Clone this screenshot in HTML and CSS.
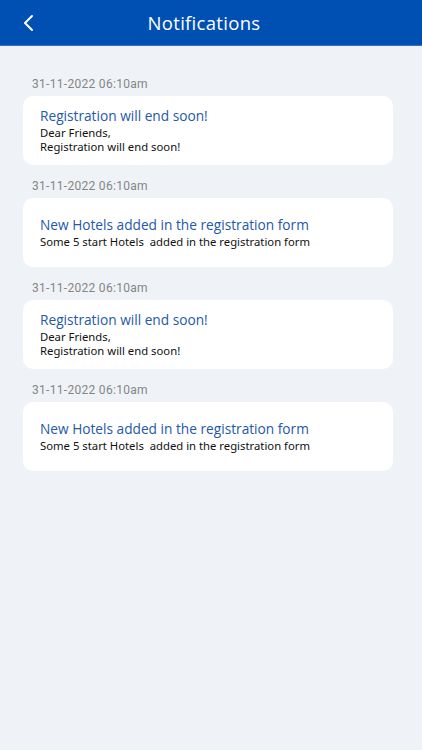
FILE: index.html
```html
<!DOCTYPE html>
<html lang="en">
<head>
  <meta charset="UTF-8" />
  <meta name="viewport" content="width=device-width, initial-scale=1.0"/>
  <title>Notifications</title>
  <link rel="stylesheet" href="styles.css">
</head>
<body>
  <header>
    <button class="back" aria-label="Back">
      <svg width="12" height="18" viewBox="0 0 12 18"><path d="M10 2 L3 9 L10 16" fill="none" stroke="#fff" stroke-width="2" stroke-linecap="round" stroke-linejoin="round"/></svg>
    </button>
    <h1>Notifications</h1>
  </header>

  <div id="list">
    <div class="item">
      <div class="date">31-11-2022 06:10am</div>
      <div class="card">
        <div class="title">Registration will end soon!</div>
        <div class="text">Dear Friends,<br>Registration will end soon!</div>
      </div>
    </div>
    <div class="item">
      <div class="date">31-11-2022 06:10am</div>
      <div class="card">
        <div class="title">New Hotels added in the registration form</div>
        <div class="text">Some 5 start Hotels&nbsp; added in the registration form</div>
      </div>
    </div>
    <div class="item">
      <div class="date">31-11-2022 06:10am</div>
      <div class="card">
        <div class="title">Registration will end soon!</div>
        <div class="text">Dear Friends,<br>Registration will end soon!</div>
      </div>
    </div>
    <div class="item">
      <div class="date">31-11-2022 06:10am</div>
      <div class="card">
        <div class="title">New Hotels added in the registration form</div>
        <div class="text">Some 5 start Hotels&nbsp; added in the registration form</div>
      </div>
    </div>
  </div>
</body>
</html>
```

FILE: styles.css
```css
body {
  margin: 0;
  padding: 0;
  background: #eff3f7;
  font-family: "Open Sans", sans-serif;
  min-height: 750px;
}
header {
  height: 45px;
  display: flex;
  align-items: center;
  justify-content: center;
  position: relative;
  background-color: #0050b4;
  border-bottom: 1px solid #3f6fb8;
}
header h1 {
  margin: 0 14px 0 0;
  font-size: 18.5px;
  font-weight: 400;
  color: #fff;
  letter-spacing: 0.3px;
}
.back {
  position: absolute;
  left: 18px;
  top: 13px;
  background: none;
  border: 0;
  padding: 0;
  width: 20px;
  height: 20px;
  display: flex;
  align-items: center;
  justify-content: center;
}
#list {
  display: flex;
  flex-direction: column;
  gap: 13px;
  padding: 30px 29px 0 23px;
}
.date {
  font-family: Roboto, sans-serif;
  font-size: 12px;
  font-weight: 400;
  color: #858585;
  line-height: 16px;
  letter-spacing: 0.3px;
  padding-left: 9px;
  margin-bottom: 4px;
}
.card {
  background: #fff;
  border-radius: 10px;
  min-height: 69px;
  box-sizing: border-box;
  padding: 6px 17px;
  display: flex;
  flex-direction: column;
  justify-content: center;
}
.title {
  font-size: 13.7px;
  color: #2458ab;
  line-height: 18px;
  margin-bottom: 1px;
}
.text {
  font-family: "Noto Sans", sans-serif;
  font-size: 11.3px;
  font-weight: 400;
  color: #111;
  line-height: 14px;
}
```
